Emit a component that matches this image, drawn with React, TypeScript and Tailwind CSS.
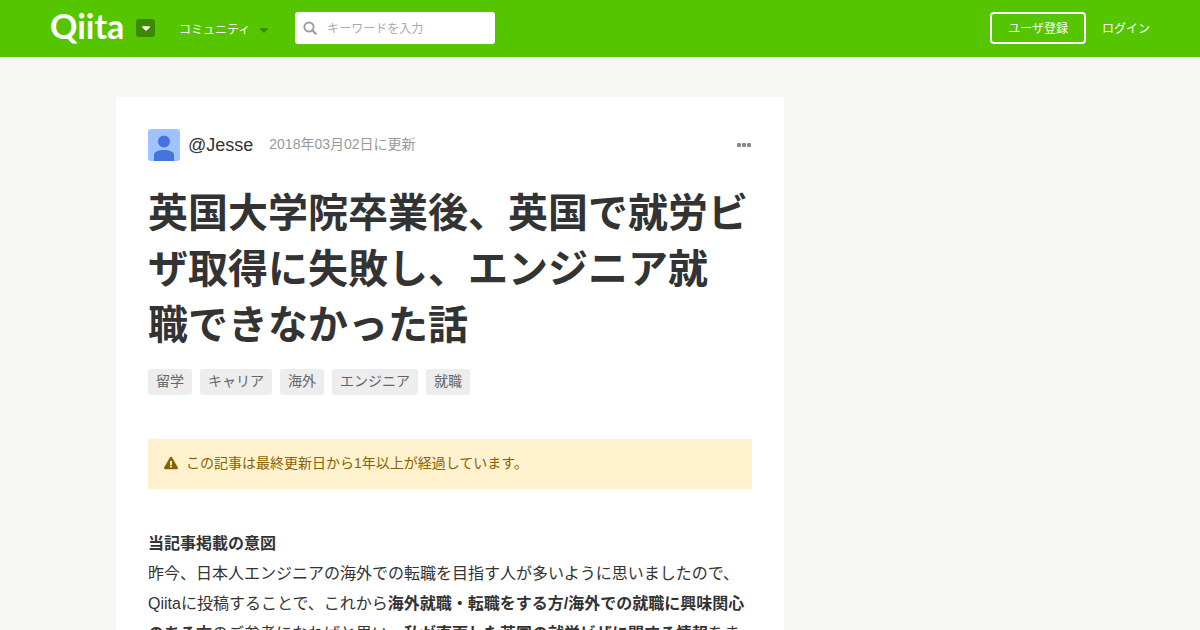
import React, { useState } from 'react';
import { FaCaretDown, FaExclamationTriangle } from 'react-icons/fa';

const tags = ['留学', 'キャリア', '海外', 'エンジニア', '就職'];

const SearchIcon: React.FC = () => (
  <svg viewBox="0 0 14 14" className="size-[14px] shrink-0" fill="none" stroke="#a0a0a0" strokeWidth="2" aria-hidden="true">
    <circle cx="6" cy="6" r="4.600" />
    <path d="M9.300 9.300l3.300 3.300" strokeLinecap="round" strokeWidth="2.300" />
  </svg>
);

const Header: React.FC = () => {
  const [keyword, setKeyword] = useState<string>('');

  return (
    <header className="bg-[#55c500] text-white">
      <div className="flex h-[57px] items-center justify-between px-[50px] pb-px">
        <div className="flex items-center">
          <a href="/" className="w-[74px] pb-1 font-[Lato] text-[34px] leading-8 font-bold">
            Qiita
          </a>
          <button aria-label="メニュー" className="ml-3 flex h-[18px] w-[19px] items-center justify-center rounded-[3px] bg-[#3b8a00]">
            <FaCaretDown className="size-3.5" />
          </button>
          <button className="ml-6 flex items-center gap-[7px] pt-1 text-xs">
            コミュニティ
            <FaCaretDown className="size-3.5 text-[#3b8a00]" />
          </button>
          <label className="ml-6 flex h-8 w-[200px] items-center rounded-[3px] bg-white px-2">
            <SearchIcon />
            <input
              type="text"
              aria-label="キーワードを入力"
              value={keyword}
              onChange={(e) => setKeyword(e.target.value)}
              placeholder="キーワードを入力"
              className="ml-2.5 w-full min-w-0 pt-0.5 text-xs text-[#333] outline-none placeholder:text-[#aaa]"
            />
          </label>
        </div>
        <div className="flex items-center gap-4 text-xs">
          <a href="/signup" className="flex h-8 items-center rounded-[4px] border-2 border-white px-4 pt-0.5">
            ユーザ登録
          </a>
          <a href="/login" className="pt-0.5">ログイン</a>
        </div>
      </div>
    </header>
  );
};

const Avatar: React.FC = () => (
  <svg viewBox="0 0 32 32" className="size-8 rounded-[3px]" aria-hidden="true">
    <rect width="32" height="32" fill="#a0c3ff" />
    <circle cx="16" cy="12.5" r="6" fill="#4374e0" />
    <path d="M6 32v-6C6 22.500 10.5 21 16 21s10 1.500 10 5v6z" fill="#4374e0" />
  </svg>
);

const App: React.FC = () => {
  return (
    <div className="min-h-screen bg-[#f6f6f4] font-['Liberation_Sans','Noto_Sans_CJK_JP',sans-serif] text-[#333]">
      <Header />

      <div className="mx-auto flex max-w-[968px] pt-10">
        <main className="min-w-0 flex-1 bg-white p-8">
          <div className="flex items-center">
            <Avatar />
            <a href="/Jesse" className="ml-2 text-lg leading-8">@Jesse</a>
            <time dateTime="2018-03-02" className="ml-4 pb-0.5 text-sm text-[#999]">2018年03月02日に更新</time>
            <button aria-label="その他" className="mr-px ml-auto flex gap-px py-2">
              <span className="size-1 rounded-[1px] bg-[#888]" />
              <span className="size-1 rounded-[1px] bg-[#888]" />
              <span className="size-1 rounded-[1px] bg-[#888]" />
            </button>
          </div>

          <h1 className="mt-6 text-[40px] leading-[56px] font-bold">
            英国大学院卒業後、英国で就労ビザ取得に失敗し、エンジニア就
            <br />
            職できなかった話
          </h1>

          <div className="mt-4 flex flex-wrap gap-2">
            {tags.map((tag) => (
              <a key={tag} href={`/tags/${tag}`} className="rounded-[3px] bg-[#ededed] px-2 pb-0.5 text-sm leading-6 text-[#666]">
                {tag}
              </a>
            ))}
          </div>

          <div className="mt-11 flex items-center gap-2 bg-[#fdf2cd] px-4 pb-0.5 text-sm leading-[48px] text-[#8a6100]">
            <FaExclamationTriangle className="size-[14px]" />
            この記事は最終更新日から1年以上が経過しています。
          </div>

          <p className="mt-10 text-base leading-[30px]">
            <strong>当記事掲載の意図</strong>
            <br />
            昨今、日本人エンジニアの海外での転職を目指す人が多いように思いましたので、Qiitaに投稿することで、これから
            <strong>海外就職・転職をする方/海外での就職に興味関心のある方</strong>
            のご参考になればと思い、
            <strong>私が直面した英国の就労ビザに関する情報</strong>
            をまとめました。
          </p>
        </main>
        <aside className="w-[300px] shrink-0" />
      </div>
    </div>
  );
};

export default App;
